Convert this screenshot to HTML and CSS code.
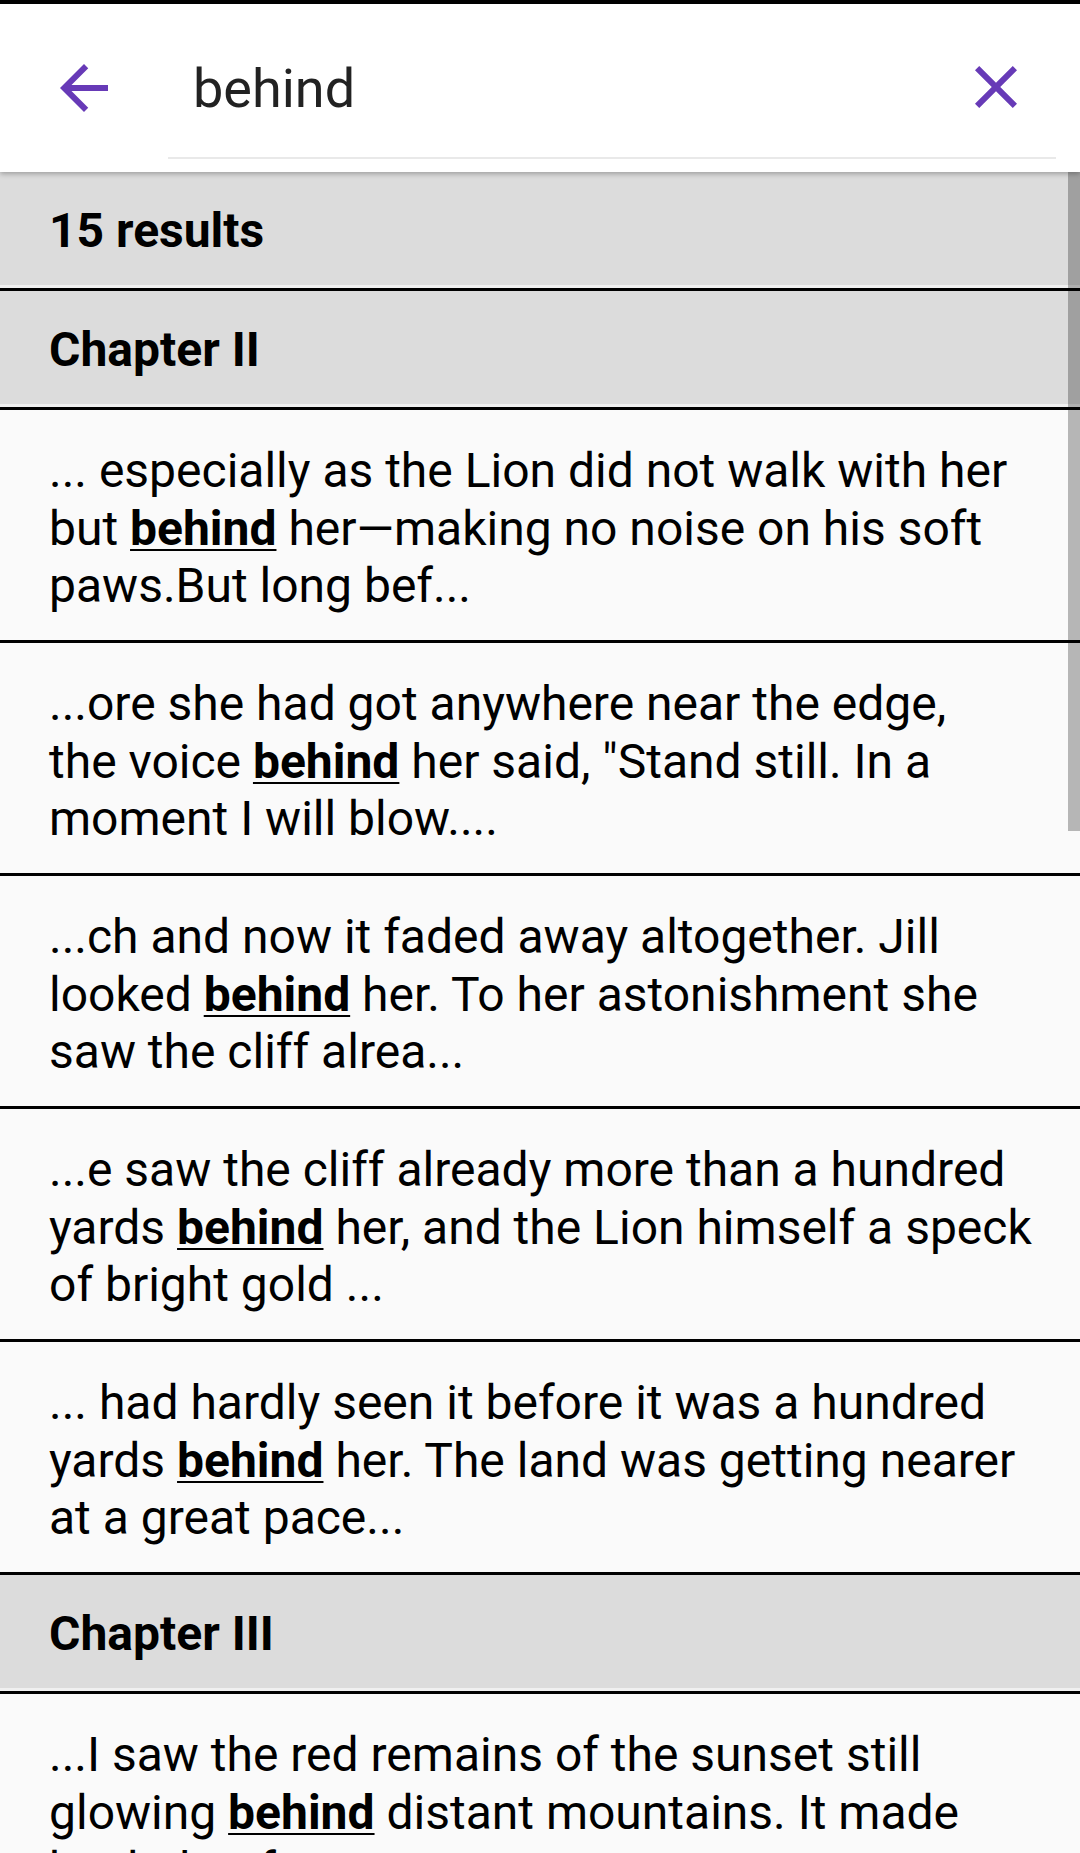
FILE: index.html
```html
<!DOCTYPE html>
<html lang="en">
<head>
<meta charset="utf-8">
<title>Search</title>
<link rel="stylesheet" href="styles.css">
</head>
<body>
<div class="statusbar"></div>
<header class="appbar">
  <div class="back">
    <svg class="icon" viewBox="0 0 24 24" width="72" height="72"><path d="M20 11H7.83l5.59-5.59L12 4l-8 8 8 8 1.41-1.41L7.83 13H20v-2z"/></svg>
  </div>
  <div class="field">
    <span class="query">behind</span>
    <svg class="icon close" viewBox="0 0 24 24" width="72" height="72"><path d="M19 6.41L17.59 5 12 10.59 6.41 5 5 6.41 10.59 12 5 17.59 6.41 19 12 13.41 17.59 19 19 17.59 13.41 12z"/></svg>
  </div>
</header>
<main class="list">
  <div class="heading">15 results</div>
  <div class="heading">Chapter II</div>
  <div class="snippet">... especially as the Lion did not walk with her<br>but <b>behind</b> her—making no noise on his soft<br>paws.But long bef...</div>
  <div class="snippet">...ore she had got anywhere near the edge,<br>the voice <b>behind</b> her said, "Stand still. In a<br>moment I will blow....</div>
  <div class="snippet">...ch and now it faded away altogether. Jill<br>looked <b>behind</b> her. To her astonishment she<br>saw the cliff alrea...</div>
  <div class="snippet">...e saw the cliff already more than a hundred<br>yards <b>behind</b> her, and the Lion himself a speck<br>of bright gold ...</div>
  <div class="snippet">... had hardly seen it before it was a hundred<br>yards <b>behind</b> her. The land was getting nearer<br>at a great pace...</div>
  <div class="heading">Chapter III</div>
  <div class="snippet">...I saw the red remains of the sunset still<br>glowing <b>behind</b> distant mountains. It made<br>back that for a moment...</div>
  <div class="scrollbar"></div>
</main>
</body>
</html>
```
FILE: styles.css
```css
html, body {
  margin: 0;
  padding: 0;
}
body {
  width: 1080px;
  height: 1853px;
  overflow: hidden;
  background: #fafafa;
  font-family: Roboto, "Liberation Sans", sans-serif;
  color: #000;
}
.statusbar {
  height: 4px;
  background: #000;
}
.appbar {
  position: relative;
  z-index: 2;
  height: 168px;
  display: flex;
  background: #fff;
  box-shadow: 0 2px 5px rgba(0, 0, 0, 0.28);
}
.icon {
  fill: #673ab7;
  display: block;
}
.back {
  width: 168px;
  flex: none;
  display: flex;
  justify-content: center;
  align-items: flex-start;
  padding-top: 48px;
  box-sizing: border-box;
}
.field {
  flex: 1;
  margin-right: 24px;
  height: 155px;
  box-sizing: border-box;
  border-bottom: 2px solid #e9e9e9;
  display: flex;
  justify-content: space-between;
  align-items: flex-start;
  padding-left: 25px;
}
.query {
  font-size: 54px;
  line-height: 64px;
  padding-top: 53px;
  color: #222;
}
.close {
  margin-top: 47px;
  margin-right: 24px;
}
.list {
  position: relative;
}
.heading {
  box-sizing: border-box;
  height: 119px;
  padding: 30px 0 0 49px;
  background: #dcdcdc;
  border-bottom: 3px solid #000;
  box-shadow: inset 0 -3px 0 #f0f0f0;
  font-size: 48px;
  font-weight: 700;
  line-height: 58px;
}
.snippet {
  box-sizing: border-box;
  height: 233px;
  padding: 32px 0 0 49px;
  border-bottom: 3px solid #000;
  font-size: 48px;
  line-height: 57.5px;
  white-space: nowrap;
}
.snippet b {
  font-weight: 700;
  text-decoration: underline;
  text-decoration-thickness: 2px;
  text-underline-offset: 4px;
}
.scrollbar {
  position: absolute;
  top: 0;
  right: 0;
  width: 12px;
  height: 659px;
  background: rgba(0, 0, 0, 0.27);
}
```
